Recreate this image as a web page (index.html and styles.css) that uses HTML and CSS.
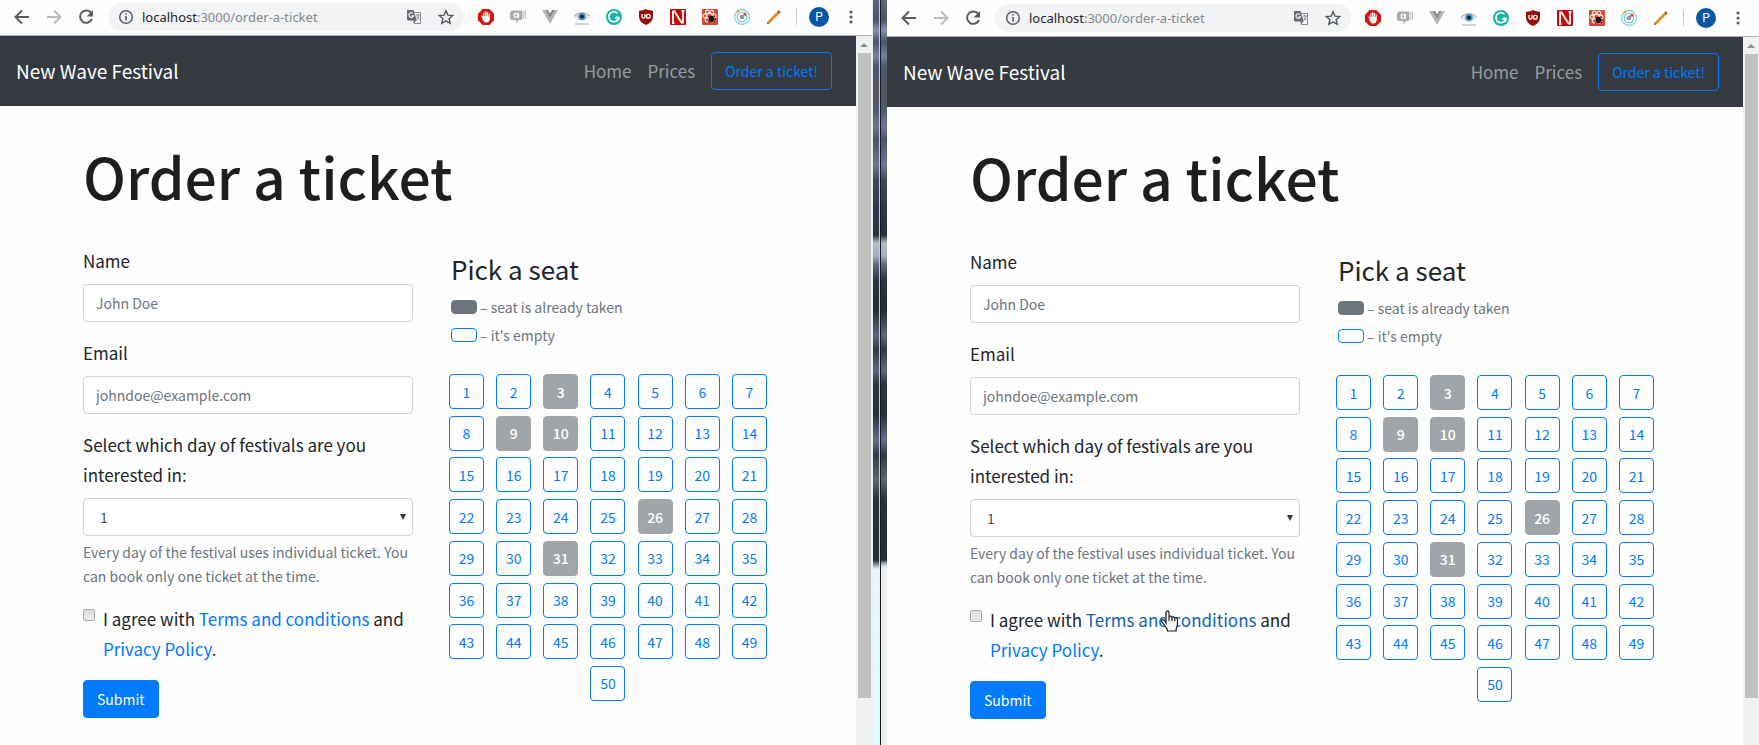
FILE: index.html
```html
<!DOCTYPE html>
<html lang="en">
<head>
<meta charset="utf-8">
<title>New Wave Festival</title>
<link rel="stylesheet" href="styles.css">
</head>
<body>
<svg class="sprite" aria-hidden="true">
  <symbol id="i-back" viewBox="0 0 20 20"><path d="M17 10H4M10 3.500L3.500 10l6.500 6.500" fill="none" stroke="#5a5e63" stroke-width="2"/></symbol>
  <symbol id="i-forward" viewBox="0 0 20 20"><path d="M3 10h13M10 3.500l6.500 6.500-6.500 6.500" fill="none" stroke="#b9bbbe" stroke-width="2"/></symbol>
  <symbol id="i-reload" viewBox="0 0 20 20"><path d="M15.300 6A6.200 6.200 0 1 0 16 12" fill="none" stroke="#5a5e63" stroke-width="2"/><path d="M17 3v6.500h-6.500z" fill="#5a5e63"/></symbol>
  <symbol id="i-info" viewBox="0 0 20 20"><circle cx="10" cy="10" r="6.300" fill="none" stroke="#5a5e63" stroke-width="1.500"/><path d="M10 9v4.500M10 6.200v1.600" stroke="#5a5e63" stroke-width="1.600"/></symbol>
  <symbol id="i-translate" viewBox="0 0 20 20"><path d="M8 5.500h8.500v11h-6z" fill="#f5f6f7" stroke="#85898d"/><path d="M3 3h6.500l3.200 10.500H4.200A1.200 1.200 0 0 1 3 12.300z" fill="#666a6f"/><path d="M9 6.500a2.300 2.300 0 1 0 .5 2.200H7.600" fill="none" stroke="#fff" stroke-width="1.100"/><path d="M12 8h3.500M13.800 7v1M15 8c-.4 2-1.500 3.500-2.500 4.500M12.700 9.500c.5 1.300 1.500 2.300 2.600 3" fill="none" stroke="#777b80" stroke-width=".9"/><path d="M10.500 13.500l-1 3 3-3z" fill="#55595e"/></symbol>
  <symbol id="i-star" viewBox="0 0 20 20"><path d="M10 3.700l1.900 4.400 4.800.4-3.600 3.200 1.100 4.700-4.200-2.500-4.200 2.500 1.100-4.700-3.600-3.200 4.800-.4z" fill="none" stroke="#55595e" stroke-width="1.400"/></symbol>
  <symbol id="i-block" viewBox="0 0 20 20"><path d="M6.700 2h6.600L18 6.700v6.600L13.300 18H6.700L2 13.300V6.700z" fill="#d9140c"/><path d="M6.300 8.300l1 2V5.500h1.200V9h.5V4.300h1.300V9h.5V5h1.300v4.500h.5V6.600h1.200v5.200c0 2.300-1.200 3.700-3.300 3.700-2 0-2.900-.9-3.700-2.600L5.300 9z" fill="#fff"/></symbol>
  <symbol id="i-chat" viewBox="0 0 20 20"><path d="M3.500 3.500H14v9.500h-3L8.500 16 8 13H3.500L2 11.500v-6z" fill="#adadad"/><path d="M15 4v8M17.300 3.500v8" stroke="#bdbdbd" stroke-width="1.300"/><circle cx="8" cy="8.300" r="1.900" fill="none" stroke="#fff" stroke-width="1.200"/><path d="M10.300 6v5" stroke="#fff" stroke-width="1.200"/></symbol>
  <symbol id="i-vee" viewBox="0 0 20 20"><path d="M2 3h4l4 7 4-7h4l-8 14z" fill="#b6b6b6"/><path d="M5.500 3H8l2 3.500L12 3h2.500L10 11z" fill="#8a8a8a"/></symbol>
  <symbol id="i-eye" viewBox="0 0 20 20"><path d="M2 10C5 5.300 14 4.300 18 10c-4 4.500-12 4.500-16 0z" fill="#e2e6ea"/><path d="M2 9.500C6 4.500 14 4.500 17.500 9" fill="none" stroke="#c8a08c" stroke-width="1.100"/><circle cx="10" cy="9.500" r="3.800" fill="#4a9bcf"/><circle cx="10" cy="9.500" r="2" fill="#10222e"/><path d="M3 17h14" stroke="#b9bdc1" stroke-width="1.300"/></symbol>
  <symbol id="i-gram" viewBox="0 0 20 20"><circle cx="10" cy="10" r="8" fill="#1fb5a5"/><path d="M13.500 6.300A5 5 0 1 0 14.700 11H11" fill="none" stroke="#fff" stroke-width="1.600"/><path d="M12.500 9.500l2.600 1.200-.5 2.800" fill="none" stroke="#fff" stroke-width="1.200"/></symbol>
  <symbol id="i-shield" viewBox="0 0 20 20"><path d="M10 2c2 1.300 4.500 1.700 7 1.700V9c0 4.500-2.500 7-7 9-4.500-2-7-4.500-7-9V3.700C5.500 3.700 8 3.300 10 2z" fill="#94100f"/><path d="M6 7v2.700c0 1 .6 1.400 1.500 1.400S9 10.700 9 9.700V7" fill="none" stroke="#fff" stroke-width="1.300"/><circle cx="12.300" cy="9.200" r="1.900" fill="none" stroke="#fff" stroke-width="1.300"/></symbol>
  <symbol id="i-norton" viewBox="0 0 20 20"><rect x="2" y="2" width="16" height="16" rx="1" fill="#c90808"/><path d="M5 16V4.500h1.500l7 11H15V4M4 16.200h2.500M13.500 4h3" fill="none" stroke="#fff" stroke-width="1.800"/></symbol>
  <symbol id="i-react" viewBox="0 0 20 20"><rect x="2" y="2" width="16" height="16" rx="1" fill="#d44a34"/><g fill="none" stroke="#f7dfda" stroke-width="1.200"><ellipse cx="9.500" cy="9" rx="6.500" ry="2.600"/><ellipse cx="9.500" cy="9" rx="6.500" ry="2.600" transform="rotate(60 9.500 9)"/><ellipse cx="9.500" cy="9" rx="6.500" ry="2.600" transform="rotate(120 9.500 9)"/></g><ellipse cx="11.500" cy="12" rx="2.600" ry="3.300" fill="#2a1512"/><path d="M8 9l7 6M15 9l-7 6M7.500 12h8" stroke="#2a1512"/></symbol>
  <symbol id="i-orbit" viewBox="0 0 20 20"><g fill="none" stroke="#6fc4e4" stroke-width="1.100"><circle cx="10" cy="10" r="7.400"/><circle cx="10" cy="10" r="4.800"/></g><circle cx="10" cy="10" r="2.400" fill="#8b99a3"/><circle cx="13" cy="7.200" r="1.600" fill="#e0512e"/><circle cx="6" cy="4" r="1.500" fill="#e9a13a"/></symbol>
  <symbol id="i-pencil" viewBox="0 0 20 20"><path d="M4.500 15.500L14.500 5.500" stroke="#db901d" stroke-width="2.600"/><path d="M14 6l1.800-1.800" stroke="#c9492f" stroke-width="2.600"/><path d="M3.600 14.600l1.800 1.800-2.300.6z" fill="#5d4321"/></symbol>
  <symbol id="i-dots" viewBox="0 0 20 20"><g fill="#5a5e63"><circle cx="10" cy="5" r="1.600"/><circle cx="10" cy="10" r="1.600"/><circle cx="10" cy="15" r="1.600"/></g></symbol>
  <symbol id="i-hand" viewBox="0 0 18 22"><path d="M5 13V2.500C5 .3 8 .3 8 2.500V7c.3-1.300 2.700-1.200 3 .5.500-1.100 2.500-.9 2.800.6.8-.8 2.700-.3 2.700 1.500V14c0 2.500-1.500 3.800-1.500 7H6.500c0-2.500-2-4-3.300-6.200L.8 11.500c-.7-1.500 1.200-2.600 2.400-1.300z" fill="#f6f6f6" stroke="#1c2126" stroke-width="1.200"/><path d="M8 7v4M11 7.500v3.700M13.800 8.200v3" stroke="#1c2126" stroke-width="1.100"/></symbol>
</svg>
<div class="desktop" id="desktop"></div>
<script src="main.js"></script>
</body>
</html>
```

FILE: styles.css
```css
* { box-sizing: border-box; }

body {
  margin: 0;
  color: #212529;
  background: #fefefe;
  font: 17px/30px "Noto Sans CJK JP", "Noto Sans", sans-serif;
}

.sprite { display: none; }

.desktop {
  display: grid;
  grid-template-columns: minmax(0, 1fr) 15px minmax(0, 1fr);
  min-height: 100vh;
}

/* Browser windows */
.window {
  position: relative;
  display: flex;
  flex-direction: column;
  overflow: hidden;
  background: #fefefe;
}

.window-right { padding-top: 1px; }

.toolbar {
  display: flex;
  align-items: center;
  gap: 12px;
  height: 36px;
  padding: 0 11px 1px 12px;
  border-bottom: 1px solid #b0b2b4;
}

.icon { flex: none; display: block; width: 20px; height: 20px; }

.tool { flex: none; padding: 0; border: 0; background: none; }

.address {
  flex: 1;
  display: flex;
  align-items: center;
  gap: 12px;
  min-width: 0;
  height: 28px;
  padding: 0 8px;
  border-radius: 14px;
  background: #f1f3f4;
}

.url {
  flex: 1;
  min-width: 0;
  margin-left: -6px;
  color: #85888c;
  font: 13px/20px "Noto Sans", "Open Sans", sans-serif;
}

.url b { color: #24272b; font-weight: 400; }

.divider { flex: none; width: 1px; height: 16px; background: #c6c8ca; }

.avatar {
  flex: none;
  width: 20px;
  height: 20px;
  padding: 0;
  border: 0;
  border-radius: 50%;
  background: #0657a5;
  color: #fff;
  font: 12px/20px Roboto, sans-serif;
}

.view { flex: 1; display: flex; }
.page { flex: 1; min-width: 0; }

.scrollbar {
  flex: none;
  display: flex;
  flex-direction: column;
  align-items: center;
  width: 16px;
  background: #f0f1f1;
}

.scroll-up {
  height: 17px;
  padding-top: 7px;
}

.scroll-up::before {
  content: "";
  display: block;
  border: 4px solid transparent;
  border-top: 0;
  border-bottom-color: #8d8f91;
}

.thumb { width: 13px; height: 91%; background: #c1c1c1; }

/* Strip of wallpaper between the windows */
.strip {
  display: flex;
  background: linear-gradient(#59677a 0, #495768 20px, #8591ad 30px, #46566a 42px, #77829b 56px, #4a5a6d 66px, #5a5565 96px, #4a5b70 110px, #6b7894 126px, #45556a 140px, #6c7795 165px, #3c4a5d 180px, #29394b 210px, #27323f 235px, #b4bbc9 243px, #a3adc0 256px, #606d83 264px, #293543 280px, #222b37 310px, #5b6779 335px, #2e3a47 350px, #5c697b 370px, #283440 385px, #27323e 415px, #626e8a 440px, #303b49 455px, #59656f 480px, #27313e 500px, #232c38 560px, #e6f7fb 569px, #dcfdfc 100%);
}

.edge-left { width: 7px; border-left: 1px solid #eef0f0; }
.edge-line { width: 1px; background: linear-gradient(#c5ced5 560px, #e0f6f6 570px); }

.edge-right {
  flex: 1;
  border-left: 1px solid #151c24;
  background: linear-gradient(#fff0 560px, #eee 569px) padding-box;
}

/* Site header */
.navbar {
  display: flex;
  align-items: center;
  gap: 16px;
  padding: 16px 24px 16px 16px;
  background: #343a40;
}

.brand { margin-right: auto; color: #fff; font-size: 19px; text-decoration: none; }
.nav-link { color: #999ca0; text-decoration: none; }

.btn {
  padding: 6px 13px;
  border: 1px solid #007bff;
  border-radius: 4px;
  font: 14px/24px "Noto Sans CJK JP", "Noto Sans", sans-serif;
}

.btn-outline { background: none; color: #007bff; }
.btn-primary { background: #007bff; color: #fff; }

/* Order form */
.container { width: 690px; max-width: 100%; margin: 0 auto; padding-top: 36px; }

h1 { margin: 0 0 37px; color: #1e1e1e; font-size: 57px; font-weight: 500; line-height: 67px; }

.columns { display: grid; grid-template-columns: 1fr 1fr; gap: 30px; align-items: start; }

.group { margin-bottom: 16px; }
.group > label { display: block; margin-bottom: 8px; }

.control {
  display: block;
  width: 100%;
  height: 38px;
  padding: 6px 12px;
  border: 1px solid #ced4da;
  border-radius: 4px;
  background: #fff;
  color: #495057;
  font: 14px/24px "Noto Sans CJK JP", "Noto Sans", sans-serif;
}

.control::placeholder { color: #6c757d; opacity: 1; }

.select { position: relative; }
.select .control { appearance: none; padding-left: 16px; }

.select::after {
  content: "";
  position: absolute;
  top: 16px;
  right: 7px;
  border: 3px solid transparent;
  border-top: 6px solid #343a40;
  border-bottom: 0;
}

.hint { display: block; margin-top: 4px; color: #6c757d; font-size: 14px; line-height: 24px; }

.check { display: flex; align-items: flex-start; gap: 8px; }
.check > label { margin-bottom: 0; }

.check input {
  appearance: none;
  flex: none;
  width: 12px;
  height: 12px;
  margin: 5px 0 0;
  border: 1px solid #a9abad;
  border-radius: 2px;
  background: linear-gradient(#dcdedd, #ececec);
}

.check a { color: #007bff; text-decoration: none; }
.check a.hovered { color: #1262b3; }

.pointer { position: absolute; left: 274px; top: 610px; width: 18px; height: 22px; }

/* Seat picker */
.picker { padding: 7px 6px 0; }
h2 { margin: 0 0 8px; padding-left: 2px; font-size: 26px; font-weight: 400; line-height: 32px; }

.legend { display: flex; align-items: center; gap: 3px; padding-left: 2px; color: #6c757d; font-size: 14px; line-height: 28px; }
.swatch { width: 26px; height: 14px; border: 1px solid #007bff; border-radius: 4px; }
.swatch-taken { border-color: #6c757d; background: #6c757d; }

.seats {
  display: grid;
  grid-template-columns: repeat(7, 35px);
  justify-content: space-between;
  align-content: space-between;
  min-height: 327px;
  margin-top: 25px;
}

.seat {
  height: 35px;
  padding: 0;
  border: 1px solid #007bff;
  border-radius: 4px;
  background: none;
  color: #007bff;
  font: 14px/24px "Noto Sans CJK JP", "Noto Sans", sans-serif;
}

.seat:last-child { grid-column: 4; }
.seat:disabled { border-color: #a0a5aa; background: #a0a5aa; color: #fff; font-weight: 500; }
```

FILE: main.js
```js
const TAKEN = [3, 9, 10, 26, 31];
const EXTENSIONS = ["block", "chat", "vee", "eye", "gram", "shield", "norton", "react", "orbit", "pencil"];

const icon = (name) => `<svg class="icon" aria-hidden="true"><use href="#i-${name}"/></svg>`;
const tool = (name) => `<button class="tool" type="button" aria-label="${name}">${icon(name)}</button>`;

const seats = () =>
  Array.from({ length: 50 }, (_, i) => i + 1)
    .map((n) => `<button class="seat" type="button"${TAKEN.includes(n) ? " disabled" : ""}>${n}</button>`)
    .join("");

const browserWindow = (side, hovered) => `
<section class="window window-${side}">
  <div class="toolbar">
    ${tool("back")}${tool("forward")}${tool("reload")}
    <div class="address">
      ${icon("info")}
      <span class="url"><b>localhost</b>:3000/order-a-ticket</span>
      ${tool("translate")}${tool("star")}
    </div>
    ${EXTENSIONS.map(tool).join("")}
    <span class="divider"></span>
    <button class="avatar" type="button">P</button>
    ${tool("dots")}
  </div>
  <div class="view">
    <div class="page">
      <nav class="navbar">
        <a class="brand" href="#">New Wave Festival</a>
        <a class="nav-link" href="#">Home</a>
        <a class="nav-link" href="#">Prices</a>
        <button class="btn btn-outline" type="button">Order a ticket!</button>
      </nav>
      <main class="container">
        <h1>Order a ticket</h1>
        <div class="columns">
          <form>
            <div class="group">
              <label for="name-${side}">Name</label>
              <input class="control" id="name-${side}" type="text" placeholder="John Doe">
            </div>
            <div class="group">
              <label for="email-${side}">Email</label>
              <input class="control" id="email-${side}" type="email" placeholder="johndoe@example.com">
            </div>
            <div class="group">
              <label for="day-${side}">Select which day of festivals are you interested in:</label>
              <div class="select"><select class="control" id="day-${side}"><option>1</option></select></div>
              <small class="hint">Every day of the festival uses individual ticket. You can book only one ticket at the time.</small>
            </div>
            <div class="group check">
              <input id="agree-${side}" type="checkbox">
              <label for="agree-${side}">I agree with <a href="#"${hovered ? ' class="hovered"' : ""}>Terms and conditions</a> and <a href="#">Privacy Policy</a>.</label>
            </div>
            <button class="btn btn-primary" type="button">Submit</button>
          </form>
          <section class="picker">
            <h2>Pick a seat</h2>
            <div class="legend"><span class="swatch swatch-taken"></span>– seat is already taken</div>
            <div class="legend"><span class="swatch"></span>– it's empty</div>
            <div class="seats">${seats()}</div>
          </section>
        </div>
      </main>
    </div>
    <div class="scrollbar"><div class="scroll-up"></div><div class="thumb"></div></div>
  </div>
  ${hovered ? '<svg class="pointer" aria-hidden="true"><use href="#i-hand"/></svg>' : ""}
</section>`;

document.getElementById("desktop").innerHTML =
  browserWindow("left", false) +
  '<div class="strip"><div class="edge-left"></div><div class="edge-line"></div><div class="edge-right"></div></div>' +
  browserWindow("right", true);
```
